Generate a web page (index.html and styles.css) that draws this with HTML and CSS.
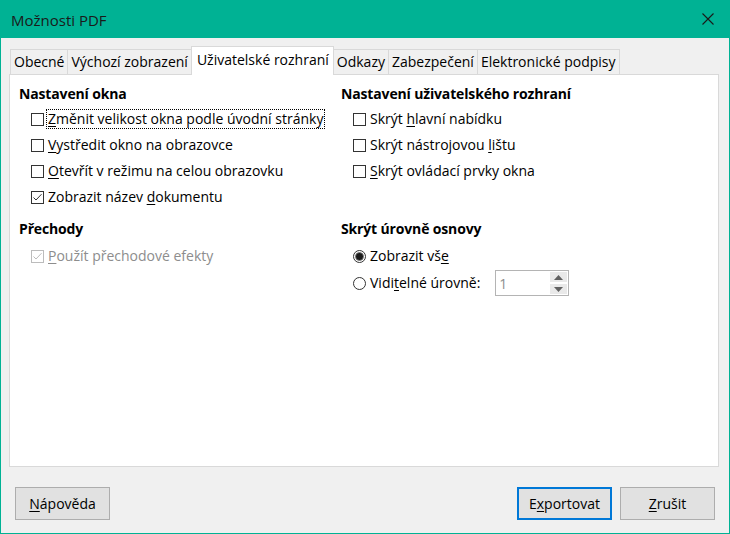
FILE: index.html
```html
<!DOCTYPE html>
<html lang="cs">
<head>
<meta charset="utf-8">
<title>Možnosti PDF</title>
<link rel="stylesheet" href="styles.css">
</head>
<body>
<div class="window">
  <div class="titlebar">
    <span class="title">Možnosti PDF</span>
    <svg class="close" width="12" height="12" viewBox="0 0 12 12"><path d="M0.5 0.5L11.5 11.5M11.5 0.5L0.5 11.5" stroke="#1a1a1a" stroke-width="1.1" fill="none"/></svg>
  </div>
  <div class="client">
    <div class="tabs">
      <div class="tab">Obecné</div>
      <div class="tab">Výchozí zobrazení</div>
      <div class="tab active">Uživatelské rozhraní</div>
      <div class="tab">Odkazy</div>
      <div class="tab">Zabezpečení</div>
      <div class="tab">Elektronické podpisy</div>
    </div>
    <div class="panel">
      <div class="col left">
        <div class="heading">Nastavení okna</div>
        <div class="row"><span class="cb"></span><span class="lbl focus"><u>Z</u>měnit velikost okna podle úvodní stránky</span></div>
        <div class="row"><span class="cb"></span><span class="lbl"><u>V</u>ystředit okno na obrazovce</span></div>
        <div class="row"><span class="cb"></span><span class="lbl"><u>O</u>tevřít v režimu na celou obrazovku</span></div>
        <div class="row"><span class="cb checked"><svg width="11" height="11" viewBox="0 0 11 11"><path d="M1.5 5.5L4 8L9.5 2.2" stroke="#333" stroke-width="1" fill="none"/></svg></span><span class="lbl">Zobrazit název <u>d</u>okumentu</span></div>
        <div class="heading h2">Přechody</div>
        <div class="row dis"><span class="cb checked"><svg width="11" height="11" viewBox="0 0 11 11"><path d="M1.5 5.5L4 8L9.5 2.2" stroke="#bcbcbc" stroke-width="1" fill="none"/></svg></span><span class="lbl"><u>P</u>oužít přechodové efekty</span></div>
      </div>
      <div class="col right">
        <div class="heading">Nastavení uživatelského rozhraní</div>
        <div class="row"><span class="cb"></span><span class="lbl">Skrýt <u>h</u>lavní nabídku</span></div>
        <div class="row"><span class="cb"></span><span class="lbl">Skrýt nástrojovou <u>l</u>ištu</span></div>
        <div class="row"><span class="cb"></span><span class="lbl"><u>S</u>krýt ovládací prvky okna</span></div>
        <div class="heading h2r">Skrýt úrovně osnovy</div>
        <div class="row rad1"><svg class="radio" width="13" height="13" viewBox="0 0 13 13"><circle cx="6.5" cy="6.5" r="6" fill="#fff" stroke="#333"/><circle cx="6.5" cy="6.5" r="4" fill="#1a1a1a" stroke="#777" stroke-width="0.8"/></svg><span class="lbl">Zobrazit vš<u>e</u></span></div>
        <div class="row rad2"><svg class="radio" width="13" height="13" viewBox="0 0 13 13"><circle cx="6.5" cy="6.5" r="6" fill="#fff" stroke="#333"/></svg><span class="lbl">Vidi<u>t</u>elné úrovně:</span>
          <div class="spin"><span class="val">1</span>
            <div class="spinbtns">
              <div class="sb"><svg width="9" height="5" viewBox="0 0 9 5"><path d="M0 5L4.5 0L9 5Z" fill="#606060"/></svg></div>
              <div class="sb"><svg width="9" height="5" viewBox="0 0 9 5"><path d="M0 0L4.5 5L9 0Z" fill="#606060"/></svg></div>
            </div>
          </div>
        </div>
      </div>
    </div>
    <div class="buttons">
      <button class="btn"><u>N</u>ápověda</button>
      <span class="spacer"></span>
      <button class="btn default">E<u>x</u>portovat</button>
      <button class="btn"><u>Z</u>rušit</button>
    </div>
  </div>
</div>
</body>
</html>
```

FILE: styles.css
```css
* { box-sizing: border-box; }
html, body { margin: 0; padding: 0; }
body {
  font-family: "Open Sans", "Noto Sans", sans-serif;
  font-size: 14px;
  color: #000;
  background: #f0f0f0;
}
.window {
  width: 730px;
  height: 534px;
  border: 1px solid #00b294;
  border-top: none;
  background: #f0f0f0;
  display: flex;
  flex-direction: column;
}
.titlebar {
  height: 38px;
  background: #00b294;
  display: flex;
  align-items: center;
  padding: 0 14px 0 10px;
  margin: 0 -1px;
}
.title { flex: 1; font-size: 15px; color: #1a1a1a; padding-top: 1px; padding-left: 1px; }
.close { display: block; margin-right: 2px; }
.client {
  flex: 1;
  display: flex;
  flex-direction: column;
  padding: 0 10px 0 8px;
}
.tabs {
  display: flex;
  align-items: flex-end;
  margin-top: 8px;
  padding-left: 1px;
  height: 28px;
  position: relative;
  z-index: 1;
}
.tab {
  height: 25px;
  line-height: 23px;
  padding: 0 3px 0 3px;
  border: 1px solid #d9d9d9;
  border-bottom: none;
  border-left: none;
  background: #f0f0f0;
  white-space: nowrap;
}
.tab:first-child { border-left: 1px solid #d9d9d9; }
.tab.active {
  height: 29px;
  line-height: 26px;
  background: #fff;
  margin-left: -1px;
  border-left: 1px solid #d9d9d9;
  margin-bottom: -1px;
  padding: 0 4px 0 5px;
}
.panel {
  height: 393px;
  background: #fff;
  border: 1px solid #d9d9d9;
  display: flex;
  padding: 9px 0 0 9px;
}
.col { display: flex; flex-direction: column; }
.col.left { width: 322px; }
.heading {
  font-weight: 700;
  height: 20px;
  line-height: 20px;
  margin-bottom: 2px;
  letter-spacing: -0.15px;
}
.h2 { margin-top: 9px; margin-bottom: 4px; }
.h2r { margin-top: 35px; margin-bottom: 4px; }
.row {
  height: 26px;
  display: flex;
  align-items: center;
  padding-left: 12px;
  white-space: nowrap;
}
.cb {
  width: 13px;
  height: 13px;
  border: 1px solid #333;
  background: #fff;
  margin-right: 3px;
  flex: none;
  display: flex;
  align-items: center;
  justify-content: center;
}
.dis { color: #8d8d8d; }
.dis .cb { border-color: #bcbcbc; }
.lbl { line-height: 18px; padding: 0 1px; }
.lbl.focus { outline: 1px dotted #000; outline-offset: 0; }
u { text-decoration: underline; text-underline-offset: 2px; }
.radio { flex: none; margin-right: 3px; display: block; }
.rad2 { height: 28px; }
.spin {
  margin-left: 14px;
  width: 74px;
  height: 26px;
  border: 1px solid #b4b4b4;
  display: flex;
  align-items: center;
  justify-content: space-between;
  padding: 0 1px 0 3px;
}
.val { color: #8d8d8d; }
.spinbtns { display: flex; flex-direction: column; gap: 2px; }
.sb {
  width: 17px;
  height: 10px;
  background: #e9e9e9;
  display: flex;
  align-items: center;
  justify-content: center;
}
.buttons {
  display: flex;
  align-items: center;
  padding: 20px 4px 0 6px;
  gap: 8px;
}
.spacer { flex: 1; }
.btn {
  font-family: inherit;
  font-size: 14px;
  width: 95px;
  height: 33px;
  background: #e1e1e1;
  border: 1px solid #adadad;
  color: #000;
  padding: 0;
}
.btn.default { border: 2px solid #0078d7; }
```
